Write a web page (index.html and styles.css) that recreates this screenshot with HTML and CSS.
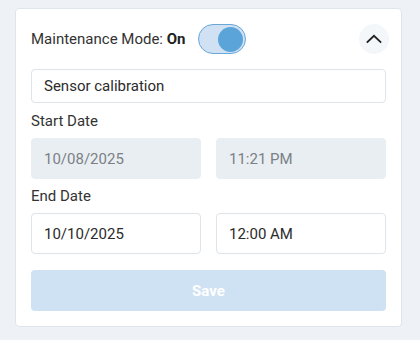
FILE: index.html
```html
<!DOCTYPE html>
<html>
<head>
<meta charset="utf-8">
<link rel="stylesheet" href="styles.css">
</head>
<body>
<div class="card">
  <div class="header">
    <div class="mode">
      <span class="mode-label">Maintenance Mode: <b>On</b></span>
      <span class="toggle"><span class="knob"></span></span>
    </div>
    <button class="collapse" type="button">
      <svg width="16" height="16" viewBox="0 0 16 16"><path d="M1.5 11 L8 4.8 L14.5 11" fill="none" stroke="#222" stroke-width="1.8" stroke-linecap="square"/></svg>
    </button>
  </div>
  <div class="field title">Sensor calibration</div>
  <div class="label">Start Date</div>
  <div class="row">
    <div class="field big disabled">10/08/2025</div>
    <div class="field big disabled">11:21 PM</div>
  </div>
  <div class="label label-end">End Date</div>
  <div class="row">
    <div class="field big">10/10/2025</div>
    <div class="field big">12:00 AM</div>
  </div>
  <button class="save" type="button">Save</button>
</div>
</body>
</html>
```
FILE: styles.css
```css
html, body {
  margin: 0;
  padding: 0;
  background: #eef2f6;
  font-family: Roboto, "Liberation Sans", sans-serif;
  color: #2b2b2b;
}
body {
  padding: 8px 18px 0 15px;
}
.card {
  background: #fff;
  border: 1px solid #dfe5ea;
  border-radius: 4px;
  padding: 15px 15px 15px 15px;
  display: flex;
  flex-direction: column;
}
.header {
  display: flex;
  align-items: center;
  justify-content: space-between;
  height: 30px;
  margin-bottom: 15px;
}
.mode {
  display: flex;
  align-items: center;
  gap: 13px;
}
.mode-label {
  font-size: 15px;
  color: #333;
}
.mode-label b {
  font-weight: 700;
  color: #222;
}
.toggle {
  width: 48px;
  height: 30px;
  box-sizing: border-box;
  border: 1.5px solid #6aa7d9;
  background: #cfe1f2;
  border-radius: 15px;
  display: flex;
  align-items: center;
  justify-content: flex-end;
  padding-right: 2px;
}
.knob {
  width: 25px;
  height: 25px;
  border-radius: 50%;
  background: #5ba4d9;
}
.collapse {
  width: 30px;
  height: 30px;
  border: none;
  border-radius: 50%;
  background: #f4f7fa;
  display: flex;
  align-items: center;
  justify-content: center;
  padding: 0;
  margin-right: -3px;
}
.field {
  box-sizing: border-box;
  border: 1px solid #dde4ea;
  border-radius: 4px;
  background: #fff;
  font-size: 15px;
  color: #2b2b2b;
  display: flex;
  align-items: center;
  padding: 0 12px;
}
.title {
  height: 34px;
}
.big {
  height: 41px;
}
.disabled {
  background: #e9eef2;
  border-color: #e9eef2;
  color: #7b8086;
}
.label {
  font-size: 15px;
  color: #333;
  margin: 9px 0 8px;
  line-height: 18px;
}
.label-end {
  margin-top: 8px;
}
.row {
  display: grid;
  grid-template-columns: 1fr 1fr;
  gap: 15px;
}
.save {
  margin-top: 16px;
  height: 41px;
  border: none;
  border-radius: 4px;
  background: #cfe2f3;
  color: #fff;
  font-family: Roboto, "Liberation Sans", sans-serif;
  font-size: 15px;
  font-weight: 700;
}
```
